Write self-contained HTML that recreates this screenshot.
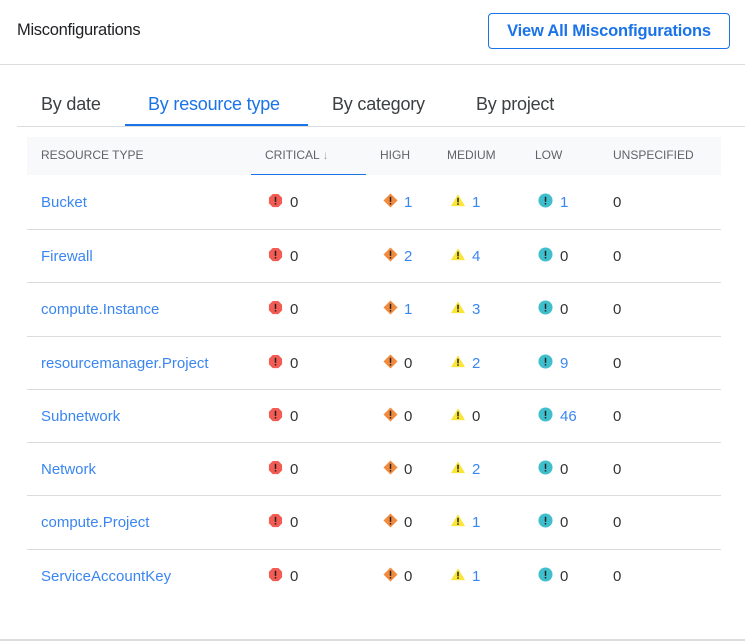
<!DOCTYPE html>
<html><head><meta charset="utf-8"><style>
*{box-sizing:border-box;margin:0;padding:0}
body{width:745px;height:642px;background:#fff;font-family:"Liberation Sans",sans-serif;position:relative;overflow:hidden;color:#202124}
.a{position:absolute;white-space:nowrap}
.title{left:17px;top:21px;font-size:16.5px;color:#202124;letter-spacing:-0.3px}
.btn{left:488px;top:13px;width:242px;height:36px;border:1px solid #1a73e8;border-radius:4px;color:#1a73e8;font-size:16.5px;font-weight:bold;text-align:center;line-height:34px;letter-spacing:-0.2px}
.hr{position:absolute;left:0;width:745px;height:1px;background:#dadce0}
.tab{top:94px;font-size:18px;color:#3c4043;letter-spacing:-0.2px}
.th{top:137px;left:27px;width:694px;height:38px;background:#f8f9fa;position:absolute}
.hd{top:148px;font-size:12px;color:#5f6368}
.row{position:absolute;left:27px;width:694px;height:53px;border-top:1px solid #dadce0}
.c{position:absolute;top:18px;font-size:15px;white-space:nowrap;color:#333}
.c.l{color:#3a86f0}
.ic{position:absolute;top:17px;line-height:0}
.i1{left:241px}.i2{left:356px}.i3{left:423px}.i4{left:511px}
.n1{left:263px}.n2{left:377px}.n3{left:445px}.n4{left:533px}.n5{left:586px}.n0{left:14px}
</style></head><body>
<svg width="0" height="0" style="position:absolute">
<defs>
<g id="cr"><polygon points="5,1 11,1 15,5 15,11 11,15 5,15 1,11 1,5" fill="#f25c54"/><rect x="7.2" y="4" width="1.6" height="5.5" fill="#222"/><rect x="7.2" y="10.7" width="1.6" height="1.6" fill="#222"/></g>
<g id="hi"><polygon points="8,0.5 15.5,8 8,15.5 0.5,8" fill="#f18a3c"/><rect x="7.2" y="4" width="1.6" height="5.5" fill="#222"/><rect x="7.2" y="10.7" width="1.6" height="1.6" fill="#222"/></g>
<g id="me"><polygon points="8,1.5 15.5,14 0.5,14" fill="#fbe536"/><rect x="7.2" y="5" width="1.6" height="5" fill="#222"/><rect x="7.2" y="11" width="1.6" height="1.6" fill="#222"/></g>
<g id="lo"><circle cx="8" cy="8" r="7.5" fill="#3fbfcc"/><rect x="7.2" y="4" width="1.6" height="5.5" fill="#222"/><rect x="7.2" y="10.7" width="1.6" height="1.6" fill="#222"/></g>
</defs></svg>
<div class="a title">Misconfigurations</div>
<div class="a btn">View All Misconfigurations</div>
<div class="hr" style="top:64px"></div>
<div class="a tab" style="left:41px">By date</div>
<div class="a tab" style="left:148px;color:#1a73e8">By resource type</div>
<div class="a tab" style="left:332px">By category</div>
<div class="a tab" style="left:476px">By project</div>
<div class="hr" style="top:126px;left:17px;width:728px"></div>
<div style="position:absolute;left:125px;top:124px;width:183px;height:2px;background:#1a73e8"></div>
<div class="th"></div>
<div class="a hd" style="left:41px">RESOURCE TYPE</div>
<div class="a hd" style="left:265px">CRITICAL <span style="color:#aaa">&#8595;</span></div>
<div class="a hd" style="left:380px">HIGH</div>
<div class="a hd" style="left:447px">MEDIUM</div>
<div class="a hd" style="left:535px">LOW</div>
<div class="a hd" style="left:613px">UNSPECIFIED</div>
<div style="position:absolute;left:251px;top:174px;width:115px;height:1px;background:#1a73e8"></div>

<div class="row" style="top:176px;border-top:none">
<div class="c l n0">Bucket</div>
<svg class="ic i1" width="15" height="15" viewBox="0 0 16 16"><use href="#cr"/></svg><div class="c n1">0</div>
<svg class="ic i2" width="15" height="15" viewBox="0 0 16 16"><use href="#hi"/></svg><div class="c l n2">1</div>
<svg class="ic i3" width="16" height="15" viewBox="0 0 16 16"><use href="#me"/></svg><div class="c l n3">1</div>
<svg class="ic i4" width="15" height="15" viewBox="0 0 16 16"><use href="#lo"/></svg><div class="c l n4">1</div>
<div class="c n5">0</div></div>

<div class="row" style="top:229px">
<div class="c l n0">Firewall</div>
<svg class="ic i1" width="15" height="15" viewBox="0 0 16 16"><use href="#cr"/></svg><div class="c n1">0</div>
<svg class="ic i2" width="15" height="15" viewBox="0 0 16 16"><use href="#hi"/></svg><div class="c l n2">2</div>
<svg class="ic i3" width="16" height="15" viewBox="0 0 16 16"><use href="#me"/></svg><div class="c l n3">4</div>
<svg class="ic i4" width="15" height="15" viewBox="0 0 16 16"><use href="#lo"/></svg><div class="c n4">0</div>
<div class="c n5">0</div></div>

<div class="row" style="top:282px">
<div class="c l n0">compute.Instance</div>
<svg class="ic i1" width="15" height="15" viewBox="0 0 16 16"><use href="#cr"/></svg><div class="c n1">0</div>
<svg class="ic i2" width="15" height="15" viewBox="0 0 16 16"><use href="#hi"/></svg><div class="c l n2">1</div>
<svg class="ic i3" width="16" height="15" viewBox="0 0 16 16"><use href="#me"/></svg><div class="c l n3">3</div>
<svg class="ic i4" width="15" height="15" viewBox="0 0 16 16"><use href="#lo"/></svg><div class="c n4">0</div>
<div class="c n5">0</div></div>

<div class="row" style="top:336px">
<div class="c l n0">resourcemanager.Project</div>
<svg class="ic i1" width="15" height="15" viewBox="0 0 16 16"><use href="#cr"/></svg><div class="c n1">0</div>
<svg class="ic i2" width="15" height="15" viewBox="0 0 16 16"><use href="#hi"/></svg><div class="c n2">0</div>
<svg class="ic i3" width="16" height="15" viewBox="0 0 16 16"><use href="#me"/></svg><div class="c l n3">2</div>
<svg class="ic i4" width="15" height="15" viewBox="0 0 16 16"><use href="#lo"/></svg><div class="c l n4">9</div>
<div class="c n5">0</div></div>

<div class="row" style="top:389px">
<div class="c l n0">Subnetwork</div>
<svg class="ic i1" width="15" height="15" viewBox="0 0 16 16"><use href="#cr"/></svg><div class="c n1">0</div>
<svg class="ic i2" width="15" height="15" viewBox="0 0 16 16"><use href="#hi"/></svg><div class="c n2">0</div>
<svg class="ic i3" width="16" height="15" viewBox="0 0 16 16"><use href="#me"/></svg><div class="c n3">0</div>
<svg class="ic i4" width="15" height="15" viewBox="0 0 16 16"><use href="#lo"/></svg><div class="c l n4">46</div>
<div class="c n5">0</div></div>

<div class="row" style="top:442px">
<div class="c l n0">Network</div>
<svg class="ic i1" width="15" height="15" viewBox="0 0 16 16"><use href="#cr"/></svg><div class="c n1">0</div>
<svg class="ic i2" width="15" height="15" viewBox="0 0 16 16"><use href="#hi"/></svg><div class="c n2">0</div>
<svg class="ic i3" width="16" height="15" viewBox="0 0 16 16"><use href="#me"/></svg><div class="c l n3">2</div>
<svg class="ic i4" width="15" height="15" viewBox="0 0 16 16"><use href="#lo"/></svg><div class="c n4">0</div>
<div class="c n5">0</div></div>

<div class="row" style="top:495px">
<div class="c l n0">compute.Project</div>
<svg class="ic i1" width="15" height="15" viewBox="0 0 16 16"><use href="#cr"/></svg><div class="c n1">0</div>
<svg class="ic i2" width="15" height="15" viewBox="0 0 16 16"><use href="#hi"/></svg><div class="c n2">0</div>
<svg class="ic i3" width="16" height="15" viewBox="0 0 16 16"><use href="#me"/></svg><div class="c l n3">1</div>
<svg class="ic i4" width="15" height="15" viewBox="0 0 16 16"><use href="#lo"/></svg><div class="c n4">0</div>
<div class="c n5">0</div></div>

<div class="row" style="top:549px">
<div class="c l n0">ServiceAccountKey</div>
<svg class="ic i1" width="15" height="15" viewBox="0 0 16 16"><use href="#cr"/></svg><div class="c n1">0</div>
<svg class="ic i2" width="15" height="15" viewBox="0 0 16 16"><use href="#hi"/></svg><div class="c n2">0</div>
<svg class="ic i3" width="16" height="15" viewBox="0 0 16 16"><use href="#me"/></svg><div class="c l n3">1</div>
<svg class="ic i4" width="15" height="15" viewBox="0 0 16 16"><use href="#lo"/></svg><div class="c n4">0</div>
<div class="c n5">0</div></div>

<div class="hr" style="top:639px;height:2px"></div>
</body></html>
